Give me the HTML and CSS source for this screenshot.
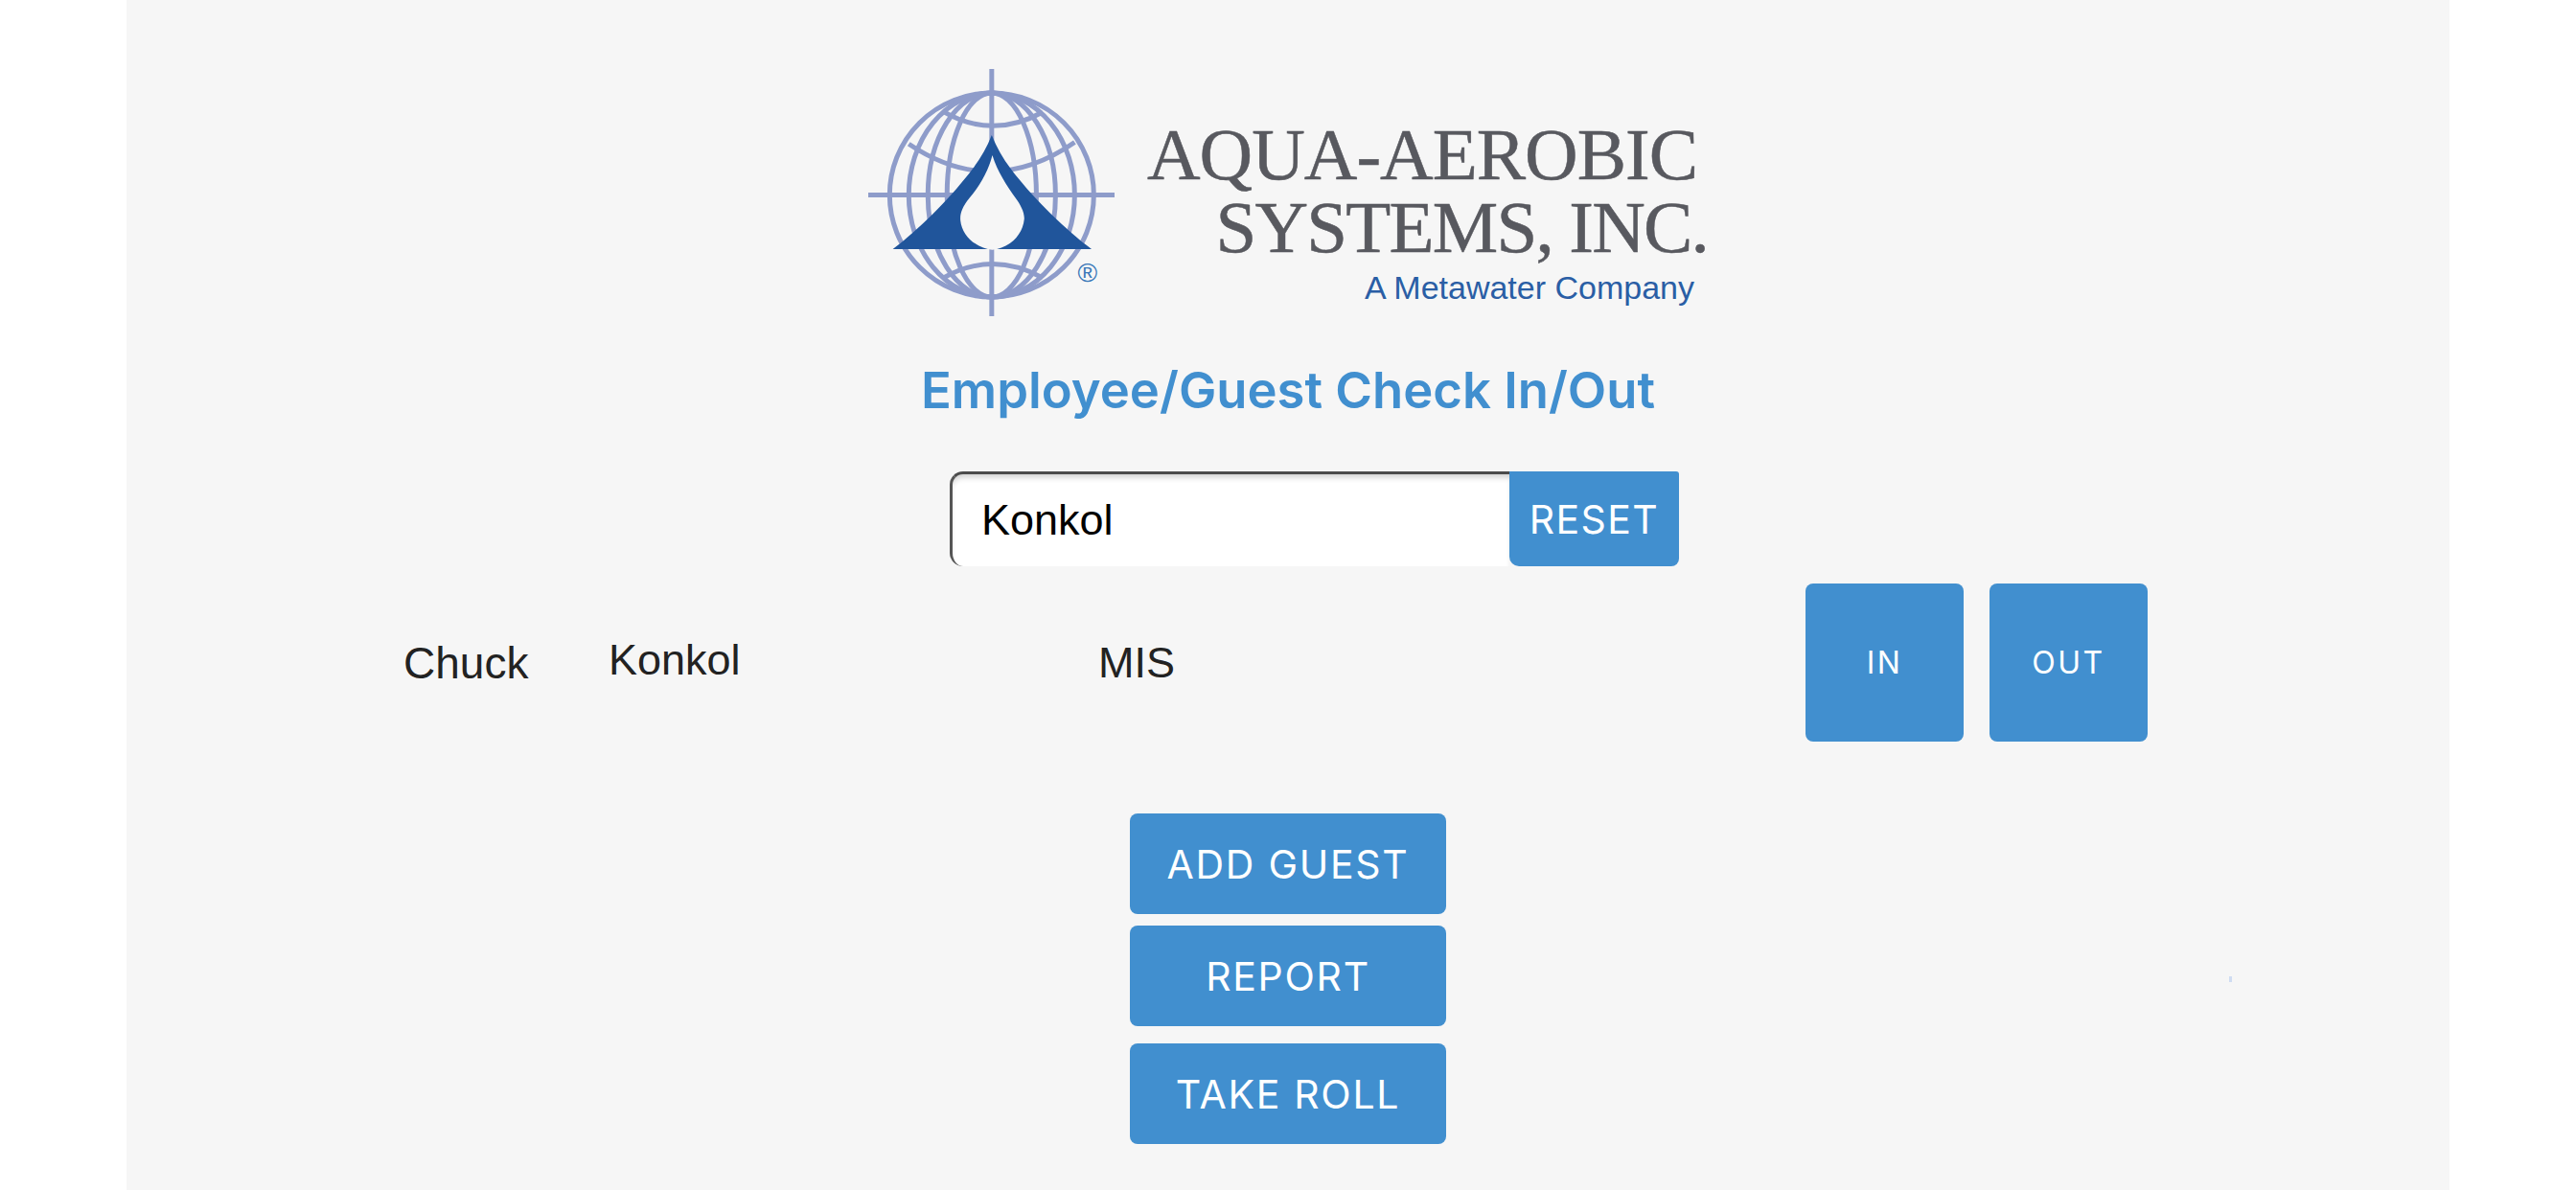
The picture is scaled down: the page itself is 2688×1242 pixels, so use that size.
FILE: index.html
```html
<!DOCTYPE html>
<html lang="en">
<head>
    <meta charset="UTF-8">
    <meta name="viewport" content="width=device-width, initial-scale=1.0">
    <title>Employee/Guest Check In/Out</title>
    <link rel="stylesheet" href="styles.css">
</head>
<body>

    <div class="panel">

        <div class="logo">
            <svg class="globe" viewBox="78 65 772 775" aria-hidden="true">
                <g class="globe-lines">
                    <circle cx="465" cy="460" r="320"/>
                    <ellipse cx="465" cy="460" rx="260" ry="320"/>
                    <ellipse cx="465" cy="460" rx="200" ry="320"/>
                    <ellipse cx="465" cy="460" rx="140" ry="320"/>
                    <path d="M465 65V840M78 460H850"/>
                    <path d="M310 197Q465 288 625 200"/>
                    <path d="M205 300Q465 475 725 295"/>
                    <path d="M310 722Q465 632 625 720"/>
                </g>
                <path class="globe-peak" d="M465 272C450 310 430 345 405 378C340 465 240 565 155 630L778 630C693 565 590 465 525 378C500 345 480 310 465 272Z"/>
                <path class="globe-drop" d="M467 335C455 385 425 435 395 470C372 498 365 520 367 540C372 590 420 628 467 632C515 628 562 590 567 535C568 515 555 490 540 470C515 435 482 385 467 335Z"/>
                <text class="globe-reg" x="765" y="733" text-anchor="middle">®</text>
            </svg>
            <div class="wordmark">
                <div class="wordmark-line wordmark-aqua">AQUA-AEROBIC</div>
                <div class="wordmark-line wordmark-systems">SYSTEMS, INC.</div>
                <div class="wordmark-sub">A Metawater Company</div>
            </div>
        </div>

        <h1 class="title">Employee/Guest Check In/Out</h1>

        <div class="search-row">
            <input class="search-input" type="text" value="Konkol">
            <button class="btn reset-btn">RESET</button>
        </div>

        <div class="person-row">
            <div class="cell-first">Chuck</div>
            <div class="cell-last">Konkol</div>
            <div class="cell-dept">MIS</div>
            <div class="person-actions">
                <button class="btn square-btn">IN</button>
                <button class="btn square-btn">OUT</button>
            </div>
        </div>

        <div class="actions">
            <button class="btn action-btn">ADD GUEST</button>
            <button class="btn action-btn">REPORT</button>
            <button class="btn action-btn action-last">TAKE ROLL</button>
        </div>

        <span class="speck"></span>
    </div>

</body>
</html>
```

FILE: styles.css
```css
* {
    margin: 0;
    padding: 0;
    box-sizing: border-box;
}

body {
    background-color: white;
    font-family: 'Liberation Sans', Arial, sans-serif;
    color: #222222;
}

.panel {
    position: relative;
    width: 2424px;
    height: 1242px;
    margin: 0 auto;
    padding-top: 72px;
    background-color: #f6f6f6;
    overflow: hidden;
}

/* logo */
.logo {
    display: flex;
    justify-content: center;
    gap: 34px;
    height: 258px;
}

.globe {
    width: 257px;
    height: 258px;
    flex-shrink: 0;
}

.globe-lines {
    fill: none;
    stroke: #8e9cca;
    stroke-width: 15;
}

.globe-peak {
    fill: #20559b;
}

.globe-drop {
    fill: #f6f6f6;
}

.globe-reg {
    font-family: 'Liberation Sans', Arial, sans-serif;
    font-size: 84px;
    fill: #3a78b8;
}

.wordmark {
    width: 585px;
    padding-top: 51px;
    text-align: right;
}

.wordmark-line {
    font-family: 'Liberation Serif', 'Times New Roman', serif;
    font-size: 77px;
    line-height: 76px;
    color: #58595f;
    -webkit-text-stroke: 0.5px #58595f;
    white-space: nowrap;
}

.wordmark-aqua {
    letter-spacing: -1px;
    padding-right: 14px;
}

.wordmark-systems {
    letter-spacing: -1.8px;
}

.wordmark-sub {
    margin-top: 5px;
    padding-right: 14px;
    font-size: 34px;
    line-height: 40px;
    color: #2a5ea5;
    white-space: nowrap;
}

.title {
    margin-top: 47px;
    font-family: Inter, sans-serif;
    font-size: 52.6px;
    font-weight: 600;
    line-height: 60px;
    text-align: center;
    color: #418fcf;
}

/* buttons */
.btn {
    border: none;
    border-radius: 8px;
    background-color: #418fcf;
    color: white;
    font-family: Inter, sans-serif;
    font-weight: 400;
    cursor: pointer;
}

/* search */
.search-row {
    display: flex;
    justify-content: center;
    height: 99px;
    margin-top: 55px;
    padding-left: 55px;
}

.search-input {
    width: 584px;
    height: 99px;
    padding-left: 30px;
    border: none;
    border-top: 3px solid #4b4b4b;
    border-left: 3px solid #555555;
    border-radius: 14px 0 0 14px;
    background-color: white;
    box-shadow: inset 0 6px 6px -3px rgba(0, 0, 0, 0.2);
    font-family: 'Liberation Sans', Arial, sans-serif;
    font-size: 45px;
    color: black;
    outline: none;
}

.reset-btn {
    width: 177px;
    height: 99px;
    border-radius: 0 3px 8px 10px;
    font-size: 41px;
    letter-spacing: 1.4px;
}

/* person row */
.person-row {
    display: grid;
    grid-template-columns: 214px 511px 738px auto;
    align-items: center;
    height: 165px;
    margin-top: 18px;
    padding-left: 289px;
    font-size: 46px;
}

.cell-last {
    padding-bottom: 6px;
    font-size: 45px;
}

.cell-dept {
    font-size: 45px;
}

.person-actions {
    display: flex;
    gap: 27px;
}

.square-btn {
    width: 165px;
    height: 165px;
    font-size: 32px;
    letter-spacing: 2.5px;
}

/* bottom buttons */
.actions {
    display: flex;
    flex-direction: column;
    align-items: center;
    margin-top: 75px;
}

.action-btn {
    width: 330px;
    height: 105px;
    margin-bottom: 12px;
    font-size: 41px;
    letter-spacing: 1.7px;
}

.action-btn + .action-btn {
    margin-bottom: 18px;
}

.action-last {
    margin-bottom: 0;
}

.speck {
    position: absolute;
    left: 2194px;
    top: 1019px;
    width: 3px;
    height: 6px;
    background-color: #cfdcf2;
}
```
